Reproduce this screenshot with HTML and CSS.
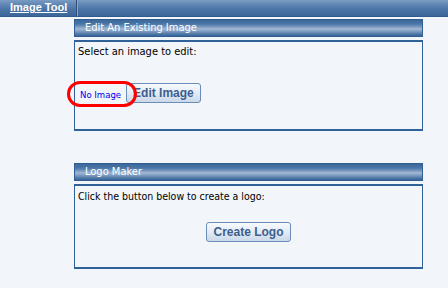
FILE: index.html
```html
<!DOCTYPE html>
<html lang="en">
<head>
    <meta charset="UTF-8">
    <title>Image Tool</title>
    <link rel="stylesheet" href="styles.css">
</head>
<body>
    <div class="topbar">
        <a class="tab" href="#">Image Tool</a>
    </div>

    <div class="content">
        <!-- edit panel -->
        <div class="panel">
            <div class="panel-head">Edit An Existing Image</div>
            <div class="panel-body edit-body">
                <p>Select an image to edit:</p>
                <div class="edit-row">
                    <span class="noimage">No Image<span class="ring"></span></span><button class="btn">Edit Image</button>
                </div>
            </div>
        </div>

        <!-- logo panel -->
        <div class="panel logo-panel">
            <div class="panel-head">Logo Maker</div>
            <div class="panel-body logo-body">
                <p>Click the button below to create a logo:</p>
                <div class="center">
                    <button class="btn">Create Logo</button>
                </div>
            </div>
        </div>
    </div>
</body>
</html>
```

FILE: styles.css
```css
*{
    margin: 0;
    padding: 0;
    box-sizing: border-box;
}

body{
    background-color: #f2f6fa;
    font-family: 'DejaVu Sans Condensed', 'DejaVu Sans', sans-serif;
    font-size: 11px;
    color: #000;
}

.topbar{
    height: 17px;
    background: linear-gradient(180deg, #7b9cc3 0%, #5f85b3 30%, #4a73a5 60%, #3c6699 100%);
    border-bottom: 1px solid #2f5b8e;
    display: flex;
}

.tab{
    display: block;
    width: 77px;
    height: 16px;
    padding-left: 10px;
    line-height: 15px;
    color: #fff;
    font-family: 'Liberation Sans', Arial, sans-serif;
    font-weight: bold;
    font-size: 11px;
    text-decoration: underline;
    border-right: 1px solid #2c4f7c;
    box-shadow: 1px 0 0 #8aa6c8;
}

.content{
    margin-left: 74px;
    width: 349px;
    padding-top: 2px;
}

.panel-head{
    height: 18px;
    border: 1px solid #2e5e94;
    background: linear-gradient(180deg, #3d6898 0%, #4a76a8 25%, #7f9dc2 45%, #a3b9d4 55%, #7f9dc2 70%, #4a73a4 90%, #3a6496 100%);
    color: #fff;
    font-size: 11px;
    line-height: 16px;
    padding-left: 10px;
}

.panel-body{
    margin-top: 3px;
    border: 1px solid #2e6298;
    border-top-width: 2px;
    border-bottom-width: 2px;
    padding: 3px 3px;
}

.edit-body{
    height: 91px;
}

.logo-panel{
    margin-top: 32px;
}

.logo-body{
    height: 85px;
}

.panel-body p{
    font-size: 11px;
    line-height: 14px;
}

.logo-body p{
    font-size: 10.5px;
}

.edit-row{
    margin-top: 24px;
    padding-left: 2px;
    display: flex;
    align-items: flex-end;
}

.noimage{
    position: relative;
    color: #0000ee;
    font-size: 9.5px;
    line-height: 12px;
    margin-right: 5px;
    margin-bottom: 2px;
}

.ring{
    position: absolute;
    left: -13px;
    top: -8px;
    width: 70px;
    height: 26px;
    border: 3px solid #f00;
    border-radius: 13px;
}

.btn{
    height: 20px;
    padding: 0 6px;
    border: 1px solid #6b8dba;
    border-radius: 3px;
    background: linear-gradient(180deg, #f7fafd 0%, #e3ebf5 50%, #cad8ea 100%);
    color: #3c5e8e;
    font-family: 'Liberation Sans', Arial, sans-serif;
    font-weight: bold;
    font-size: 12px;
}

.center{
    display: flex;
    justify-content: center;
    margin-top: 19px;
}
```
